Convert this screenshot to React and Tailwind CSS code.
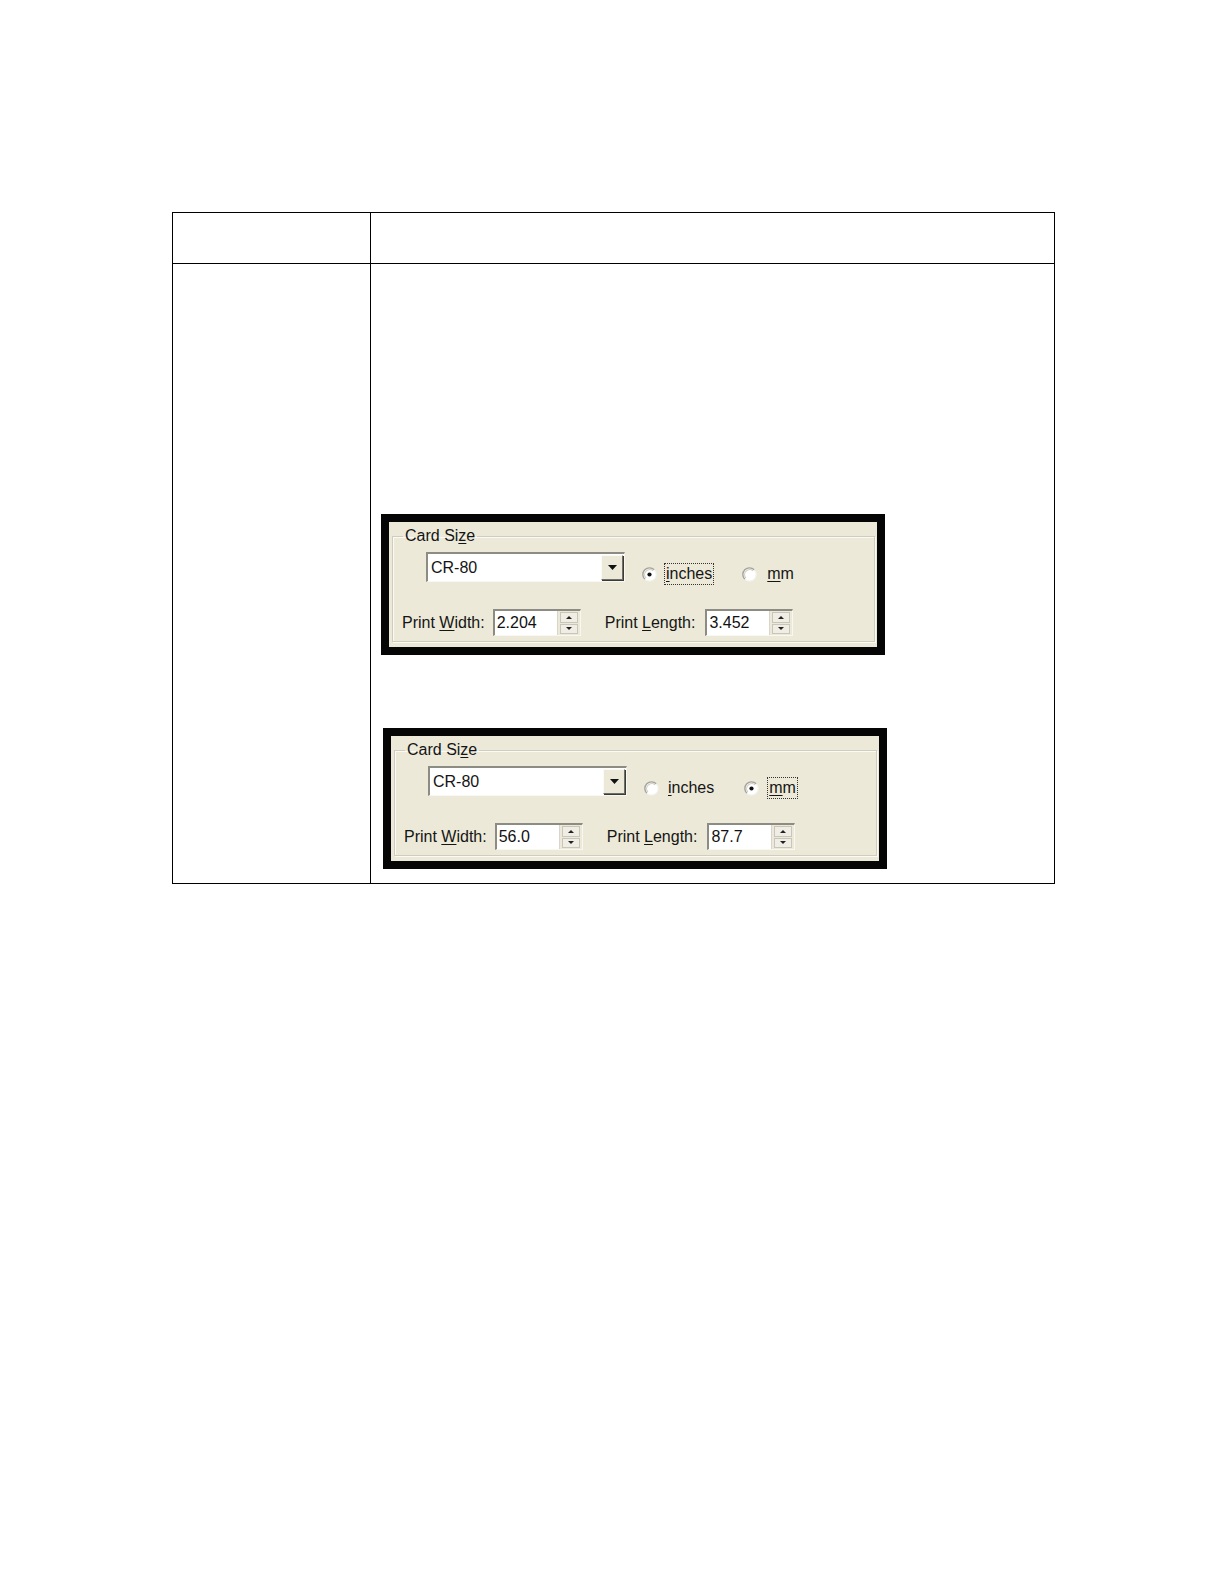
import React from 'react';

const font = { fontFamily: '"Liberation Sans", Arial, sans-serif' };

const Radio = ({ checked }) => (
  <svg width="15" height="15" viewBox="0 0 15 15" className="shrink-0">
    <circle cx="7.5" cy="7.5" r="6.6" fill="#fff" />
    <path d="M2.8 12.2 A6.6 6.6 0 0 1 12.2 2.8" fill="none" stroke="#a3a29b" strokeWidth="1.4" />
    <path d="M12.2 2.8 A6.6 6.6 0 0 1 2.8 12.2" fill="none" stroke="#f4f3ee" strokeWidth="1.2" />
    <path d="M3.9 11.1 A5.1 5.1 0 0 1 11.1 3.9" fill="none" stroke="#d2d0c6" strokeWidth="1.2" />
    {checked && <circle cx="7.5" cy="7.5" r="2.1" fill="#111" />}
  </svg>
);

const Spinner = () => (
  <div className="flex flex-col w-[23px] h-full bg-[#ECE9D8] border-l border-[#d8d6cc] px-[2px] py-[1px] gap-[1px]">
    <div className="flex-1 flex items-center justify-center border border-[#c8c6ba] bg-[#efede4]">
      <svg width="6" height="3" viewBox="0 0 6 3"><path d="M0 3 L3 0 L6 3 Z" fill="#222" /></svg>
    </div>
    <div className="flex-1 flex items-center justify-center border border-[#c8c6ba] bg-[#efede4]">
      <svg width="6" height="3" viewBox="0 0 6 3"><path d="M0 0 L6 0 L3 3 Z" fill="#222" /></svg>
    </div>
  </div>
);

const SpinBox = ({ value, className }) => (
  <div className={`flex h-[27px] w-[88px] bg-white border-t-2 border-l-2 border-t-[#8c8b84] border-l-[#8c8b84] border-b border-r border-b-[#f8f7f2] border-r-[#f8f7f2] ${className}`}>
    <div className="flex-1 flex items-center pl-[2px] text-[16px] leading-none text-[#111]">{value}</div>
    <Spinner />
  </div>
);

const CardSize = ({ unit, width, length, className }) => (
  <div className={`w-[504px] h-[141px] border-[8px] border-[#050505] bg-[#ECE9D8] pt-[5px] pl-[3px] pr-[2px] pb-[5px] ${className}`} style={font}>
    <fieldset className="h-full border border-[#cfcdbf] shadow-[inset_1px_1px_0_#fbfaf5,1px_1px_0_#fbfaf5] pl-[9px] text-[#151515]">
      <legend className="ml-[1px] px-[2px] text-[16px] leading-[18px]">
        Card Si<span className="underline underline-offset-2">z</span>e
      </legend>
      <div className="flex items-start mt-[7px] ml-[24px]">
        <div className="flex items-center w-[199px] h-[30px] bg-white border-t-2 border-l-2 border-t-[#8c8b84] border-l-[#8c8b84] border-b border-r border-b-[#f8f7f2] border-r-[#f8f7f2]">
          <span className="flex-1 pl-[3px] text-[16px] leading-none">CR-80</span>
          <div className="w-[22px] h-[25px] mr-[1px] flex items-center justify-center bg-[#ECE9D8] border border-t-[#fbfaf5] border-l-[#fbfaf5] border-b-[#6f6e68] border-r-[#6f6e68] shadow-[1px_1px_0_#3a3a36]">
            <svg width="9" height="5" viewBox="0 0 9 5"><path d="M0 0 L9 0 L4.5 5 Z" fill="#111" /></svg>
          </div>
        </div>
        <div className="flex items-center mt-[11px] ml-[17px]">
          <Radio checked={unit === 'inches'} />
          <span className={`ml-[7px] px-[1px] text-[16px] leading-[20px] border border-dotted ${unit === 'inches' ? 'border-[#333]' : 'border-transparent'}`}>
            <span className="underline underline-offset-2">i</span>nches
          </span>
        </div>
        <div className="flex items-center mt-[11px] ml-[28px]">
          <Radio checked={unit === 'mm'} />
          <span className={`ml-[8px] px-[1px] text-[16px] leading-[20px] border border-dotted ${unit === 'mm' ? 'border-[#333]' : 'border-transparent'}`}>
            <span className="underline underline-offset-2">m</span>m
          </span>
        </div>
      </div>
      <div className="flex items-center mt-[24px]">
        <span className="text-[16px] leading-none">
          Print <span className="underline underline-offset-2">W</span>idth:
        </span>
        <SpinBox value={width} className="ml-[8px]" />
        <span className="ml-[24px] text-[16px] leading-none">
          Print <span className="underline underline-offset-2">L</span>ength:
        </span>
        <SpinBox value={length} className="ml-[10px]" />
      </div>
    </fieldset>
  </div>
);

export default function App() {
  return (
    <div className="w-full h-[1584px] bg-white pt-[212px] pl-[172px]">
      <div className="w-[883px] border border-black">
        <div className="grid grid-cols-[198px_1fr] h-[51px] border-b border-black">
          <div className="border-r border-black" />
          <div />
        </div>
        <div className="grid grid-cols-[198px_1fr] h-[619px]">
          <div className="border-r border-black" />
          <div className="flex flex-col">
            <CardSize unit="inches" width="2.204" length="3.452" className="mt-[250px] ml-[10px]" />
            <CardSize unit="mm" width="56.0" length="87.7" className="mt-[73px] ml-[12px]" />
          </div>
        </div>
      </div>
    </div>
  );
}
